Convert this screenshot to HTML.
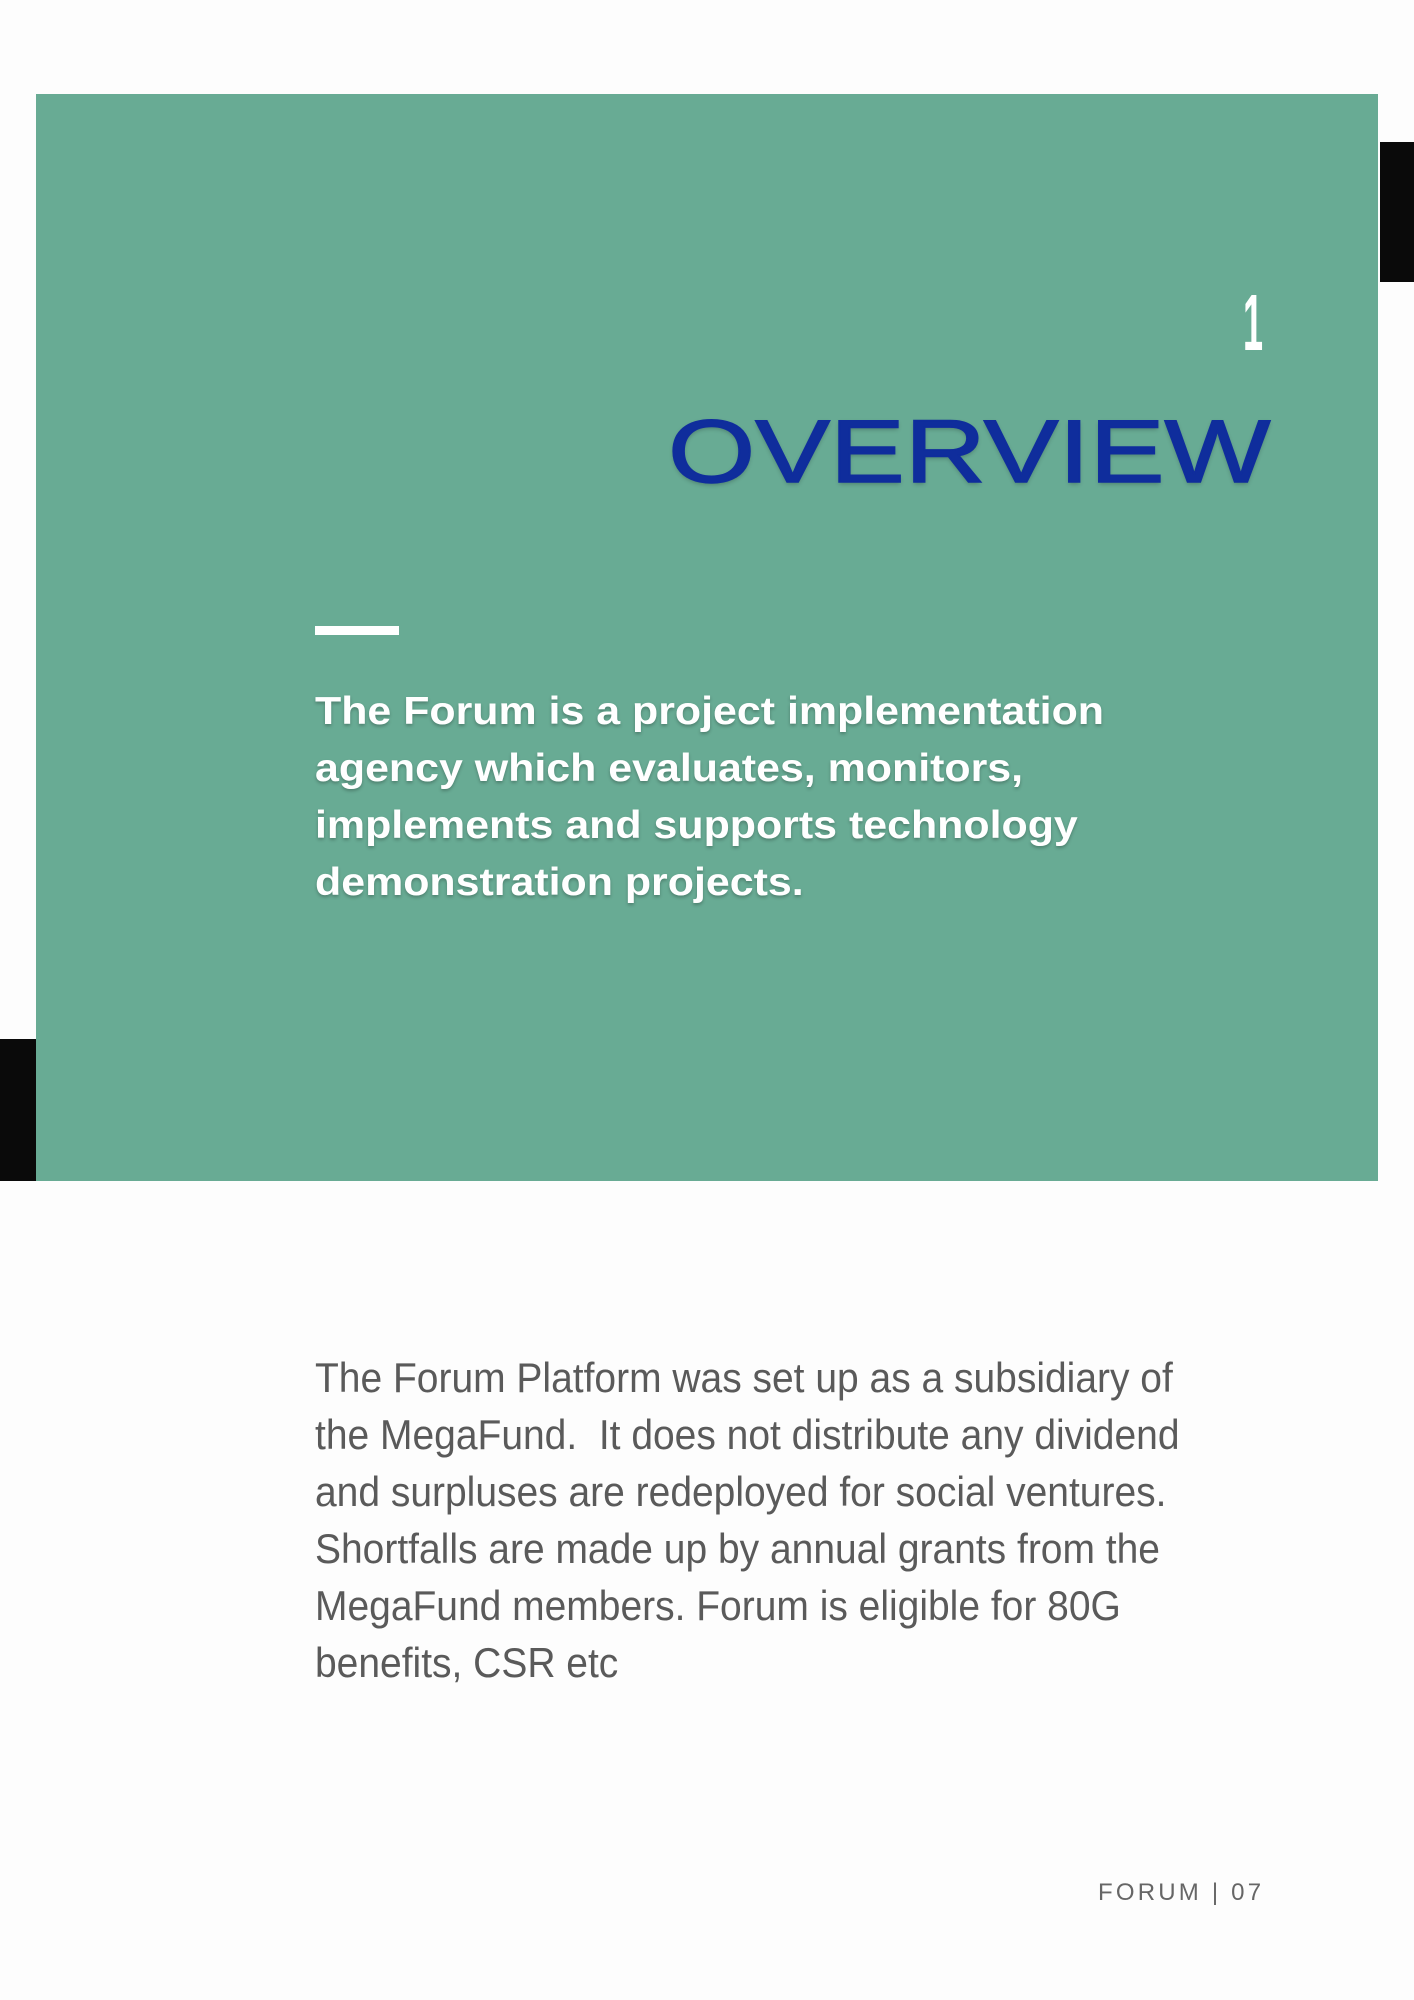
<!DOCTYPE html>
<html><head><meta charset="utf-8"><style>
html,body{margin:0;padding:0}
body{width:1414px;height:2000px;position:relative;background:#fdfdfd;overflow:hidden;font-family:"Liberation Sans",sans-serif}
.a{position:absolute}
.l{white-space:nowrap;transform-origin:left top}
</style></head><body>
<div class="a" style="left:36px;top:94px;width:1342px;height:1087px;background:#68ab94"></div>
<div class="a" style="left:1380px;top:142px;width:34px;height:140px;background:#0a0a0a"></div>
<div class="a" style="left:0;top:1039px;width:36px;height:142px;background:#0a0a0a"></div>
<div class="a" style="left:1243px;top:283px;width:30px;font-size:80px;line-height:80px;color:#fff;font-weight:bold;transform:scaleX(0.45);transform-origin:left top">1</div>
<div class="a l" style="left:668px;top:407px;font-size:89px;line-height:89px;color:#0f2d9c;-webkit-text-stroke:1.5px #0f2d9c;transform:scaleX(1.26);text-shadow:0 2px 4px rgba(0,0,0,0.25)">OVERVIEW</div>
<div class="a" style="left:315px;top:626px;width:84px;height:9px;background:#fff"></div>
<div class="a l" style="left:315px;top:683px;font-size:39px;line-height:57px;color:#fff;font-weight:bold;text-shadow:0 2px 3px rgba(0,0,0,0.25);transform:scaleX(1.10)">
<div>The Forum is a project implementation</div>
<div>agency which evaluates, monitors,</div>
<div>implements and supports technology</div>
<div>demonstration projects.</div>
</div>
<div class="a l" style="left:315px;top:1349px;font-size:42px;line-height:57px;color:#5a5a5a;transform:scaleX(0.928)">
<div>The Forum Platform was set up as a subsidiary of</div>
<div>the MegaFund.&nbsp; It does not distribute any dividend</div>
<div>and surpluses are redeployed for social ventures.</div>
<div>Shortfalls are made up by annual grants from the</div>
<div>MegaFund members. Forum is eligible for 80G</div>
<div>benefits, CSR etc</div>
</div>
<div class="a l" style="left:1098px;top:1880px;font-size:24px;line-height:26px;color:#666;letter-spacing:3.2px">FORUM | 07</div>
</body></html>
